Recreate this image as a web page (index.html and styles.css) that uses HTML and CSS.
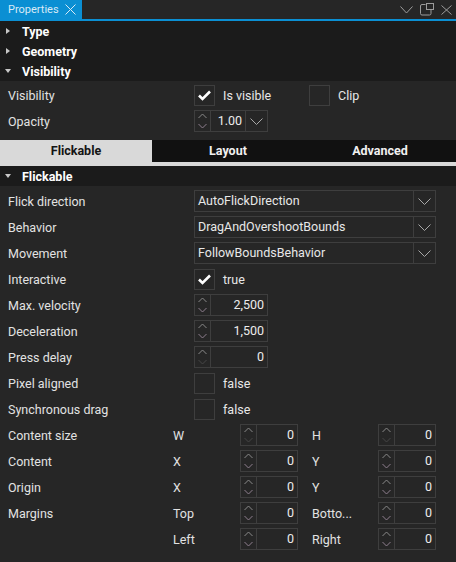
FILE: index.html
```html
<!DOCTYPE html>
<html lang="en">
<head>
    <meta charset="UTF-8">
    <meta name="viewport" content="width=device-width, initial-scale=1.0">
    <title>Properties</title>
    <link rel="stylesheet" href="styles.css">
</head>
<body>
    <div class="panel">
        <!-- Panel title bar -->
        <div class="titlebar">
            <div class="doc-tab">
                <span>Properties</span>
                <svg class="doc-close" width="11" height="11" viewBox="0 0 11 11"><path d="M0.5 0.5 L10.5 10.5 M10.5 0.5 L0.5 10.5"/></svg>
            </div>
            <div class="title-actions">
                <svg width="13" height="8" viewBox="0 0 13 8"><path d="M0.5 0.5 L6.5 7 L12.5 0.5"/></svg>
                <svg width="14" height="13" viewBox="0 0 14 13"><path d="M5.5 1.5 H2 Q0.5 1.5 0.5 3 V10.5 Q0.5 12 2 12 H9.5 Q11 12 11 10.5 V7"/><rect x="6.5" y="0.5" width="7" height="6"/></svg>
                <svg width="11" height="10" viewBox="0 0 11 10"><path d="M0.5 0.5 L10.5 9.5 M10.5 0.5 L0.5 9.5"/></svg>
            </div>
        </div>

        <div class="section-head"><span class="caret closed"></span>Type</div>
        <div class="section-head"><span class="caret closed"></span>Geometry</div>
        <div class="section-head"><span class="caret open"></span>Visibility</div>

        <div class="section-body visibility">
            <div class="row">
                <div class="label">Visibility</div>
                <div class="check-pair">
                    <div class="checkbox"><svg width="21" height="21" viewBox="0 0 21 21"><path d="M5 10.5 L8.5 14 L16 6.5"/></svg></div>
                    <span class="check-text">Is visible</span>
                </div>
                <div class="check-pair">
                    <div class="checkbox"></div>
                    <span class="check-text">Clip</span>
                </div>
            </div>
            <div class="row">
                <div class="label">Opacity</div>
                <div class="spin">
                    <div class="spin-step"></div>
                    <div class="spin-value">1.00</div>
                    <div class="combo-btn"></div>
                </div>
            </div>
        </div>

        <!-- Category tabs -->
        <div class="tabs">
            <div class="tab active">Flickable</div>
            <div class="tab">Layout</div>
            <div class="tab">Advanced</div>
        </div>

        <div class="section-head"><span class="caret open"></span>Flickable</div>

        <div class="section-body flickable" id="flickable"></div>
    </div>

    <script>
        var chevron = '<svg width="13" height="7" viewBox="0 0 13 7"><path d="M0.5 0.5 L6.5 6.5 L12.5 0.5"/></svg>';

        function stepper(disabledDown) {
            return '<svg width="15" height="20" viewBox="0 0 15 20">' +
                '<path class="up" d="M3.5 7 L7.5 3 L11.5 7"/>' +
                '<path class="down' + (disabledDown ? ' off' : '') + '" d="M3.5 13 L7.5 17 L11.5 13"/></svg>';
        }

        function combo(text) {
            return '<div class="combo"><div class="combo-text">' + text + '</div><div class="combo-btn">' + chevron + '</div></div>';
        }

        function spin(value, cls, disabledDown) {
            return '<div class="spin ' + (cls || '') + '"><div class="spin-step">' + stepper(disabledDown) +
                '</div><div class="spin-value">' + value + '</div></div>';
        }

        function check(on, text) {
            var mark = on ? '<svg width="21" height="21" viewBox="0 0 21 21"><path d="M5 10.5 L8.5 14 L16 6.5"/></svg>' : '';
            return '<div class="checkbox">' + mark + '</div><span class="check-text">' + text + '</span>';
        }

        function pair(label, a, av, b, bv, disabledDown) {
            return '<div class="label short">' + label + '</div>' +
                '<div class="sub">' + a + '</div>' + spin(av, 'small', disabledDown) +
                '<div class="sub second">' + b + '</div>' + spin(bv, 'small', disabledDown);
        }

        var rows = [
            ['Flick direction', combo('AutoFlickDirection')],
            ['Behavior', combo('DragAndOvershootBounds')],
            ['Movement', combo('FollowBoundsBehavior')],
            ['Interactive', check(true, 'true')],
            ['Max. velocity', spin('2,500')],
            ['Deceleration', spin('1,500')],
            ['Press delay', spin('0', '', true)],
            ['Pixel aligned', check(false, 'false')],
            ['Synchronous drag', check(false, 'false')]
        ];

        var html = '';
        rows.forEach(function (r) {
            html += '<div class="row"><div class="label">' + r[0] + '</div>' + r[1] + '</div>';
        });
        html += '<div class="row">' + pair('Content size', 'W', '0', 'H', '0', true) + '</div>';
        html += '<div class="row">' + pair('Content', 'X', '0', 'Y', '0') + '</div>';
        html += '<div class="row">' + pair('Origin', 'X', '0', 'Y', '0') + '</div>';
        html += '<div class="row">' + pair('Margins', 'Top', '0', 'Botto...', '0') + '</div>';
        html += '<div class="row">' + pair('', 'Left', '0', 'Right', '0') + '</div>';
        document.getElementById('flickable').innerHTML = html;

        // opacity spinbox
        document.querySelector('.visibility .spin-step').innerHTML = stepper(false);
        document.querySelector('.visibility .combo-btn').innerHTML = chevron;
    </script>
</body>
</html>
```

FILE: styles.css
```css
body {
    margin: 0;
    background-color: #262626;
    font-family: Roboto, "Liberation Sans", sans-serif;
    font-size: 12.5px;
    color: #e2e2e2;
}

.panel {
    width: 456px;
    height: 562px;
    overflow: hidden;
}

svg {
    display: block;
    fill: none;
    stroke-width: 1;
}

.titlebar {
    display: flex;
    justify-content: space-between;
    height: 19px;
    background-color: #262626;
    border-bottom: 2px solid #0b8fd3;
}

.doc-tab {
    display: flex;
    align-items: center;
    width: 82px;
    box-sizing: border-box;
    padding-left: 8px;
    background-color: #0b8fd3;
    color: #d8eaf6;
    font-size: 11px;
}

.doc-close {
    margin-left: 6px;
    stroke: #d8eaf6;
}

.title-actions {
    display: flex;
    align-items: center;
    gap: 7px;
    padding-right: 4px;
}

.title-actions svg {
    stroke: #9c9c9c;
}

.section-head {
    display: flex;
    align-items: center;
    height: 20px;
    background-color: #1b1b1b;
    color: #ffffff;
    font-weight: 700;
}

.caret {
    width: 16px;
    margin-right: 6px;
    display: flex;
    justify-content: center;
}

.caret::before {
    content: "";
    border-style: solid;
    border-color: transparent;
}

.caret.closed::before {
    border-width: 3.5px 0 3.5px 4px;
    border-left-color: #c8c8c8;
}

.caret.open::before {
    border-width: 4px 3px 0 3px;
    border-top-color: #c8c8c8;
}

.section-body.visibility {
    padding: 1px 0 6px;
}

.section-body.flickable {
    padding-top: 2px;
}

.row {
    display: flex;
    align-items: center;
    height: 26px;
    padding-left: 8px;
}

.label {
    width: 186px;
    flex: none;
    white-space: nowrap;
}

.label.short {
    width: 165px;
}

.sub {
    width: 67px;
    flex: none;
}

.sub.second {
    width: 66px;
    margin-left: 14px;
}

.check-pair {
    display: flex;
    align-items: center;
    width: 115px;
}

.checkbox {
    width: 21px;
    height: 21px;
    box-sizing: border-box;
    border: 1px solid #3e3e3e;
    flex: none;
}

.checkbox svg {
    margin: -1px;
    stroke: #ffffff;
    stroke-width: 2.6;
}

.check-text {
    margin-left: 8px;
    color: #e8e8e8;
}

.combo,
.spin {
    display: flex;
    height: 22px;
    box-sizing: border-box;
    border: 1px solid #3e3e3e;
    flex: none;
}

.combo {
    width: 242px;
}

.combo-text {
    flex: 1;
    padding-left: 3px;
    line-height: 20px;
    color: #e8e8e8;
}

.combo-btn {
    width: 21px;
    border-left: 1px solid #3e3e3e;
    display: flex;
    align-items: center;
    justify-content: center;
}

.combo-btn svg {
    stroke: #a8a8a8;
}

.spin {
    width: 74px;
}

.spin.small {
    width: 58px;
}

.spin-step {
    width: 15px;
    border-right: 1px solid #3e3e3e;
}

.spin-step .up {
    stroke: #8a8a8a;
}

.spin-step .down {
    stroke: #8f7f8f;
}

.spin-step .down.off {
    stroke: #464646;
}

.spin-value {
    flex: 1;
    text-align: right;
    padding-right: 3px;
    line-height: 20px;
    color: #ececec;
}

.tabs {
    display: flex;
    height: 22px;
    border-bottom: 4px solid #d9d9d9;
    background-color: #111111;
}

.tab {
    flex: 1;
    text-align: center;
    line-height: 22px;
    font-weight: 700;
    color: #f0f0f0;
}

.tab.active {
    background-color: #d9d9d9;
    color: #141414;
}
```
